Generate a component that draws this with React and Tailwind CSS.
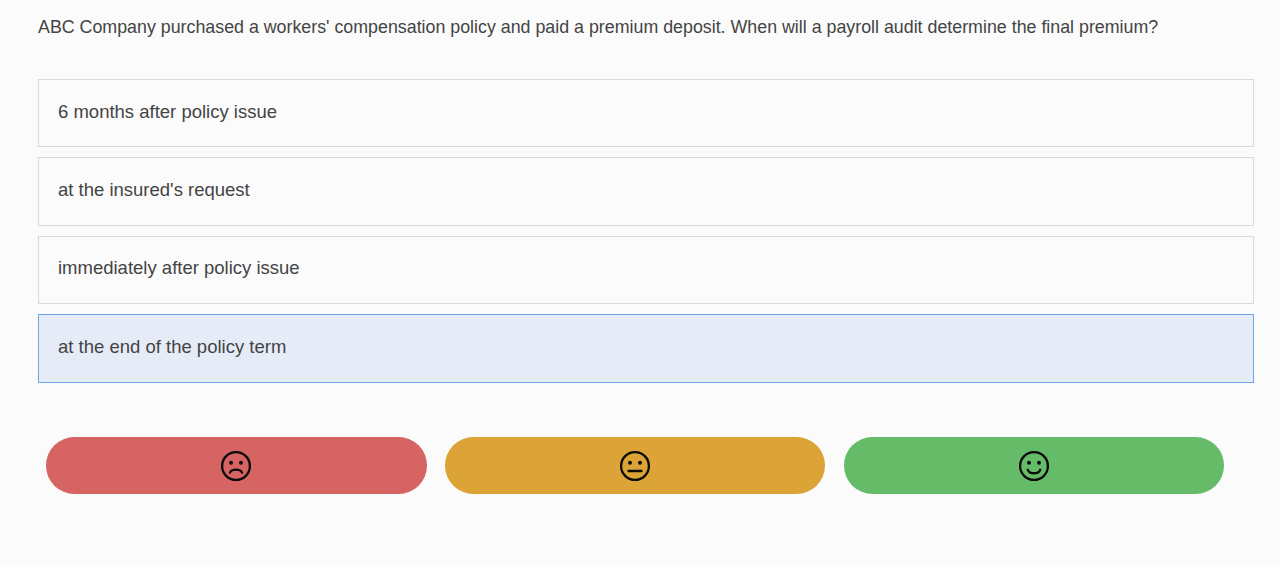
const options = [
  { label: "6 months after policy issue" },
  { label: "at the insured's request" },
  { label: "immediately after policy issue" },
  { label: "at the end of the policy term", selected: true },
];

const Face = ({ mouth }) => (
  <svg width="32" height="32" viewBox="0 0 32 32" fill="none" stroke="#0b0b0b" strokeWidth="2.3" strokeLinecap="round">
    <circle cx="16" cy="16" r="13.9" />
    <circle cx="11" cy="12.7" r="2" fill="#0b0b0b" stroke="none" />
    <circle cx="21" cy="12.7" r="2" fill="#0b0b0b" stroke="none" />
    <path d={mouth} />
  </svg>
);

const App = () => {
  return (
    <div className="min-h-[567px] bg-[#fbfbfb] px-[38px] pt-[16px] font-['Liberation_Sans',Arial,sans-serif] text-[#444444]">
      <p className="text-[17.82px] leading-[23px]">
        ABC Company purchased a workers' compensation policy and paid a premium deposit. When will a payroll audit determine the final premium?
      </p>

      <div className="mt-[39.6px] flex w-[1216px] flex-col gap-[9.9px]">
        {options.map((o) => (
          <div
            key={o.label}
            className={
              o.selected
                ? "flex h-[68.6px] items-center border border-[#6ea4e8] bg-[#e5ecf8] pb-[3px] pl-[19px] text-[18.5px]"
                : "flex h-[68.6px] items-center border border-[#d9d9d9] bg-[#fbfbfb] pb-[3px] pl-[19px] text-[18.5px]"
            }
          >
            {o.label}
          </div>
        ))}
      </div>

      <div className="mt-[54.3px] ml-[8px] flex gap-[18.5px]">
        <button className="flex h-[57px] w-[380.5px] items-center justify-center rounded-[28.5px] bg-[#d56463] pt-[2px]">
          <Face mouth="M10 22.6c1.8-4 10.2-4 12 0" />
        </button>
        <button className="flex h-[57px] w-[380px] items-center justify-center rounded-[28.5px] bg-[#dca337] pt-[2px]">
          <Face mouth="M9.5 21h13" />
        </button>
        <button className="flex h-[57px] w-[380px] items-center justify-center rounded-[28.5px] bg-[#66bb69] pt-[2px]">
          <Face mouth="M9.8 19.8c1.6 4.6 10.8 4.6 12.4 0" />
        </button>
      </div>
    </div>
  );
};

export default App;
